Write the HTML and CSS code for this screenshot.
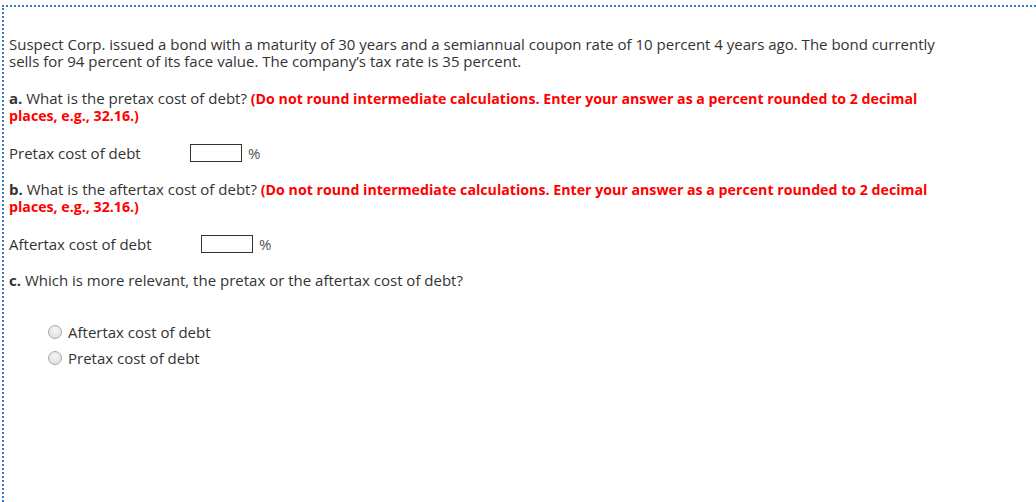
FILE: index.html
```html
<!DOCTYPE html>
<html>
<head>
<meta charset="utf-8">
<link rel="stylesheet" href="styles.css">
</head>
<body>
<div class="frame">
  <p class="para">Suspect Corp. issued a bond with a maturity of 30 years and a semiannual coupon rate of 10 percent 4 years ago. The bond currently sells for 94 percent of its face value. The company’s tax rate is 35 percent.</p>

  <p class="para"><b class="lbl">a.</b> What is the pretax cost of debt? <span class="note">(Do not round intermediate calculations. Enter your answer as a percent rounded to 2 decimal places, e.g., 32.16.)</span></p>

  <div class="row">
    <span class="rowlabel w-a">Pretax cost of debt</span>
    <span class="box"></span>
    <span class="unit">%</span>
  </div>

  <p class="para"><b class="lbl">b.</b> What is the aftertax cost of debt? <span class="note">(Do not round intermediate calculations. Enter your answer as a percent rounded to 2 decimal places, e.g., 32.16.)</span></p>

  <div class="row">
    <span class="rowlabel w-b">Aftertax cost of debt</span>
    <span class="box"></span>
    <span class="unit">%</span>
  </div>

  <p class="para"><b class="lbl">c.</b> Which is more relevant, the pretax or the aftertax cost of debt?</p>

  <ul class="choices">
    <li><span class="radio"></span>Aftertax cost of debt</li>
    <li><span class="radio"></span>Pretax cost of debt</li>
  </ul>
</div>
</body>
</html>
```

FILE: styles.css
```css
html, body {
  margin: 0;
  padding: 0;
  background: #fff;
  height: 100%;
  overflow: hidden;
}
body {
  font-family: "Open Sans", "Liberation Sans", sans-serif;
  font-size: 15px;
  line-height: 17px;
  color: #333;
}
.frame {
  box-sizing: border-box;
  margin: 5px 0 0 2px;
  border-top: 2px dotted #3b78c2;
  border-left: 2px dotted #3b78c2;
  padding: 29px 86px 0 5px;
  height: calc(100% - 5px);
}
.para {
  margin: 0 0 20px 0;
}
.lbl {
  font-weight: 700;
  color: #333;
}
.note {
  color: #f00;
  font-weight: 700;
  font-size: 14.2px;
}
.row {
  display: flex;
  align-items: center;
  height: 18px;
  margin-bottom: 19px;
}
.rowlabel {
  display: inline-block;
}
.w-a { width: 181px; }
.w-b { width: 192px; }
.box {
  width: 50px;
  height: 16px;
  border: 1px solid #333;
  margin-right: 6px;
}
.unit {
  color: #555;
}
.choices {
  list-style: none;
  margin: 0;
  padding: 10px 0 0 39px;
}
.choices li {
  display: flex;
  align-items: center;
  height: 26px;
}
.radio {
  width: 12px;
  height: 12px;
  border-radius: 50%;
  border: 1px solid #a8a8a8;
  background: radial-gradient(circle at 50% 35%, #f4f4f4 0%, #dcdcdc 100%);
  margin-right: 6px;
}
```
